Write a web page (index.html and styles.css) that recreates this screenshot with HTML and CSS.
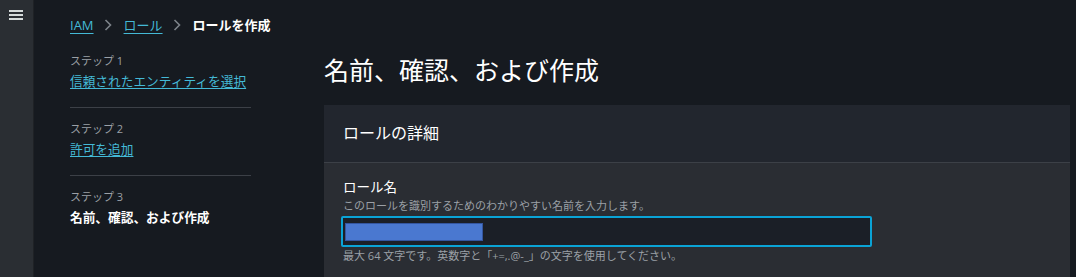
FILE: index.html
```html
<!DOCTYPE html>
<html lang="ja">
<head>
  <meta charset="UTF-8">
  <meta name="viewport" content="width=device-width, initial-scale=1.0">
  <title>ロールを作成</title>
  <link rel="stylesheet" href="styles.css">
</head>
<body>
  <div class="rail">
    <button class="menu-btn" type="button" aria-label="メニュー">
      <svg width="14" height="12" viewBox="0 0 14 12">
        <rect x="0" y="1" width="14" height="2" fill="#d5dbdb"/>
        <rect x="0" y="5" width="14" height="2" fill="#d5dbdb"/>
        <rect x="0" y="9" width="14" height="2" fill="#d5dbdb"/>
      </svg>
    </button>
  </div>
  <div class="main">
    <nav class="breadcrumb">
      <a href="#">IAM</a>
      <svg class="chev" width="8" height="12" viewBox="0 0 8 12"><path d="M1.5 1 L6.5 6 L1.5 11" fill="none" stroke="#7d8389" stroke-width="1.6"/></svg>
      <a href="#">ロール</a>
      <svg class="chev" width="8" height="12" viewBox="0 0 8 12"><path d="M1.5 1 L6.5 6 L1.5 11" fill="none" stroke="#7d8389" stroke-width="1.6"/></svg>
      <span class="current">ロールを作成</span>
    </nav>
    <div class="layout">
      <ul class="steps">
        <li class="step">
          <div class="step-num">ステップ 1</div>
          <a class="step-link" href="#">信頼されたエンティティを選択</a>
        </li>
        <li class="step">
          <div class="step-num">ステップ 2</div>
          <a class="step-link" href="#">許可を追加</a>
        </li>
        <li class="step">
          <div class="step-num">ステップ 3</div>
          <div class="step-current">名前、確認、および作成</div>
        </li>
      </ul>
      <div class="content">
        <h1>名前、確認、および作成</h1>
        <div class="card">
          <div class="card-header">ロールの詳細</div>
          <div class="card-body">
            <div class="field-label">ロール名</div>
            <div class="field-desc">このロールを識別するためのわかりやすい名前を入力します。</div>
            <div class="input">
              <span class="selection"></span>
            </div>
            <div class="field-hint">最大 64 文字です。英数字と「+=,.@-_」の文字を使用してください。</div>
          </div>
        </div>
      </div>
    </div>
  </div>
</body>
</html>
```

FILE: styles.css
```css
body {
  margin: 0;
  padding: 0;
  background: #161a20;
  color: #d5dbdb;
  font-family: 'Open Sans', 'Noto Sans CJK JP', sans-serif;
  display: flex;
  height: 277px;
  overflow: hidden;
}
.rail {
  width: 33px;
  flex: none;
  background: #2a2e33;
  border-right: 1px solid #1f2226;
}
.menu-btn {
  display: block;
  margin: 9px 0 0 9px;
  padding: 0;
  border: none;
  background: none;
  line-height: 0;
}
.main {
  flex: 1;
  padding: 15px 6px 0 36px;
  min-width: 0;
}
.breadcrumb {
  display: flex;
  align-items: center;
  height: 20px;
  font-size: 13px;
  line-height: 20px;
}
.breadcrumb a {
  color: #44b9d6;
  text-decoration: underline;
  text-underline-offset: 3px;
}
.breadcrumb .chev {
  margin: 0 12px 0 10px;
}
.breadcrumb .current {
  color: #ffffff;
  font-weight: bold;
}
.layout {
  display: flex;
  margin-top: 17px;
}
.steps {
  list-style: none;
  margin: 0;
  padding: 0;
  width: 181px;
  margin-right: 73px;
  flex: none;
}
.step {
  padding: 12px 0 15px 0;
  border-bottom: 1px solid #3c4047;
}
.step:first-child {
  padding-top: 0;
}
.step:last-child {
  border-bottom: none;
}
.step-num {
  font-size: 11px;
  line-height: 18px;
  color: #9ba0a6;
}
.step-link {
  display: block;
  width: max-content;
  font-size: 12.7px;
  line-height: 22px;
  color: #44b9d6;
  white-space: nowrap;
  text-decoration: underline;
  text-underline-offset: 2px;
}
.step-current {
  font-size: 12.7px;
  line-height: 22px;
  color: #ffffff;
  font-weight: bold;
  white-space: nowrap;
}
.content {
  flex: 1;
  min-width: 0;
}
h1 {
  margin: 0 0 17px 0;
  font-size: 25px;
  line-height: 36px;
  font-weight: normal;
  color: #ffffff;
}
.card {
  background: #2a2d33;
  height: 172px;
}
.card-header {
  background: #22262e;
  height: 57px;
  line-height: 57px;
  padding: 0 19px;
  font-size: 16px;
  color: #ffffff;
  border-bottom: 1px solid #3c4047;
}
.card-body {
  padding: 13px 19px 0 19px;
}
.field-label {
  font-size: 13.5px;
  line-height: 22px;
  color: #ffffff;
}
.field-desc, .field-hint {
  font-size: 11px;
  line-height: 16px;
  color: #9ba0a6;
}
.input {
  width: 525px;
  height: 27px;
  margin: 2px 0 1px -2px;
  border: 2px solid #0aa3d6;
  border-radius: 2px;
  background: #1b1f27;
  display: flex;
  align-items: center;
  padding-left: 2px;
}
.selection {
  width: 136px;
  height: 16px;
  background: #4a78d0;
  border: 1px solid #3456a0;
}
```
